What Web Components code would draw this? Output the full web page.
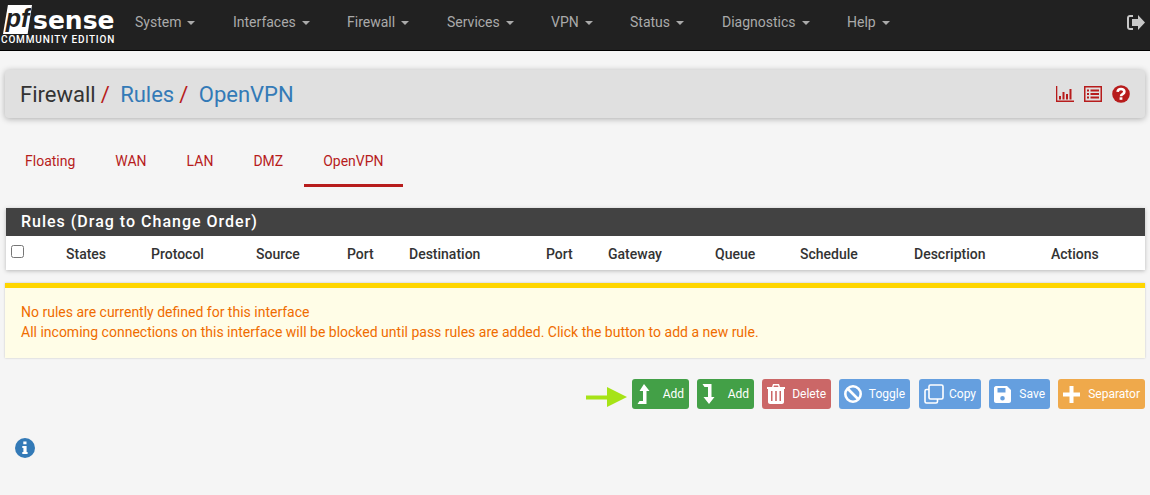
<!DOCTYPE html>
<html>
<head>
<meta charset="utf-8">
<title>Firewall: Rules: OpenVPN</title>
<style>
    html, body { margin: 0; padding: 0; }
    body {
        background: #f5f5f5;
        font-family: Roboto, "Liberation Sans", sans-serif;
        font-size: 14px;
        width: 1150px;
        height: 495px;
        overflow: hidden;
        position: relative;
    }
    main { display: block; padding: 19px 5px 0; }
</style>
</head>
<body>
<pf-navbar></pf-navbar>
<main>
    <pf-header></pf-header>
    <pf-tabs></pf-tabs>
    <pf-rules></pf-rules>
    <pf-alert>
        No rules are currently defined for this interface<br>
        All incoming connections on this interface will be blocked until pass rules are added. Click the button to add a new rule.
    </pf-alert>
    <pf-actions></pf-actions>
    <pf-info></pf-info>
</main>

<script>
const ICONS = {
    up: '<svg width="13" height="20" viewBox="0 0 13 20"><path fill="#fff" d="M7 0l5.500 7H9.500v13H.5l2-3h3.500V7H2.500z"/></svg>',
    down: '<svg width="13" height="20" viewBox="0 0 13 20"><path fill="#fff" d="M.5 0h9v13h3L7 20l-5.500-7H6V3H2.500z"/></svg>',
    trash: '<svg width="18" height="20" viewBox="0 0 18 20"><path fill="#fff" fill-rule="evenodd" d="M0 3h5l1-3h6l1 3h5v2h-1v13c0 1-1 2-2 2H3c-1 0-2-1-2-2V5H0zM7 1.500L6.500 3h5L11 1.500zM4 7v10h1.500V7zm4.200 0v10h1.600V7zm4.300 0v10H14V7z"/></svg>',
    ban: '<svg width="18" height="18" viewBox="0 0 18 18"><circle cx="9" cy="9" r="7.700" fill="none" stroke="#fff" stroke-width="2.600"/><path stroke="#fff" stroke-width="2.600" d="M3.500 3.500l11 11"/></svg>',
    clone: '<svg width="20" height="20" viewBox="0 0 20 20"><g fill="none" stroke="#fff" stroke-width="1.600"><path d="M5 5.500H2.500c-.8 0-1.500.7-1.500 1.500v10.500c0 .8.700 1.500 1.500 1.500H12c.8 0 1.500-.7 1.500-1.500V15"/><rect x="5" y="1" width="14" height="14" rx="1.500"/></g></svg>',
    save: '<svg width="17" height="17" viewBox="0 0 17 17"><path fill="#fff" fill-rule="evenodd" d="M2 0h11l4 4v11c0 1-1 2-2 2H2c-1 0-2-1-2-2V2C0 1 1 0 2 0zm1.500 2v4.500h8V2zm5 8a2.300 2.300 0 1 0 0 4.600 2.300 2.300 0 0 0 0-4.600z"/></svg>',
    plus: '<svg width="17" height="17" viewBox="0 0 17 17"><path fill="#fff" d="M6.500 0h4v6.500H17v4h-6.500V17h-4v-6.500H0v-4h6.500z"/></svg>',
    chart: '<svg width="18" height="16" viewBox="0 0 18 16"><path fill="#b71c1c" d="M0 0h1.300v14.500H18V16H0zM3 10h2v3.500H3zm3.500-4h2v7.500h-2zM10 8h2v5.500h-2zm3.500-5h2v10.500h-2z"/></svg>',
    list: '<svg width="18" height="16" viewBox="0 0 18 16"><path fill="#b71c1c" fill-rule="evenodd" d="M0 0h18v16H0zm1.500 1.500v13h15v-13zM3 3.500h2v2H3zm3.500 0H15v2H6.500zM3 7h2v2H3zm3.500 0H15v2H6.500zM3 10.500h2v2H3zm3.500 0H15v2H6.500z"/></svg>',
    help: '<svg width="18" height="18" viewBox="0 0 18 18"><circle cx="9" cy="9" r="8.800" fill="#b71c1c"/><path fill="none" stroke="#fff" stroke-width="2.600" d="M5.600 6.800C5.800 4.900 7.200 4 9 4c2 0 3.400 1.100 3.400 2.800 0 2.500-3.400 2.300-3.400 4.500"/><rect x="7.600" y="12.300" width="2.800" height="2.500" fill="#fff"/></svg>',
    signout: '<svg width="18" height="15" viewBox="0 0 18 15"><path fill="#c8c8c8" d="M6 0v2H3C2.400 2 2 2.400 2 3v9c0 .6.400 1 1 1h3v2H3c-1.700 0-3-1.300-3-3V3c0-1.700 1.300-3 3-3z"/><path fill="#c8c8c8" d="M11 0l7 7.500-7 7.500v-4H5V4h6z"/></svg>',
    info: '<svg width="20" height="20" viewBox="0 0 20 20"><circle cx="10" cy="10" r="10" fill="#337ab7"/><path fill="#fff" d="M8.300 3.500h3.200v2.800H8.300zM7.300 8h4.300v6h1v2H7.300v-2h1.100v-4H7.300z"/></svg>'
};

class PfNavbar extends HTMLElement {
    constructor() {
        super();
        this.attachShadow({mode: 'open'});
        const items = [['System', 98], ['Interfaces', 114], ['Firewall', 100], ['Services', 104], ['VPN', 79], ['Status', 92], ['Diagnostics', 125], ['Help', 60]];
        const links = items.map(([name, w]) => `<a style="width:${w}px">${name}<i></i></a>`).join('');
        this.shadowRoot.innerHTML = `
<style>
    :host {
        display: flex;
        align-items: stretch;
        height: 50px;
        background: #212121;
        border-bottom: 1px solid #000;
    }
    .logo {
        width: 135px;
        flex: none;
        position: relative;
        color: #fff;
    }
    .pf {
        position: absolute;
        left: 3px;
        top: 5px;
        width: 29px;
        height: 29px;
        background: #fff;
        clip-path: polygon(17% 0, 100% 0, 85% 100%, 0 100%);
        color: #212121;
        font: italic bold 25px/26px "Liberation Sans", sans-serif;
        text-align: center;
    }
    .sense {
        position: absolute;
        left: 33px;
        top: 6px;
        font: bold 25px/30px "DejaVu Sans", sans-serif;
    }
    .ce {
        position: absolute;
        left: 1px;
        top: 34px;
        font: 500 10px/12px Roboto, sans-serif;
        letter-spacing: 0.850px;
        white-space: nowrap;
    }
    nav { display: flex; align-items: center; flex: 1; padding-bottom: 6px; }
    a { color: #aaa; font-size: 14px; flex: none; white-space: nowrap; }
    i {
        display: inline-block;
        width: 0;
        height: 0;
        margin-left: 6px;
        vertical-align: middle;
        border-top: 4px solid #aaa;
        border-left: 4px solid transparent;
        border-right: 4px solid transparent;
    }
    .out { align-self: center; margin: 0 5px 6px 0; height: 15px; }
</style>
<div class="logo"><div class="pf">pf</div><div class="sense">sense</div><div class="ce">COMMUNITY EDITION</div></div>
<nav>${links}</nav>
<div class="out">${ICONS.signout}</div>`;
    }
}
customElements.define('pf-navbar', PfNavbar);

class PfHeader extends HTMLElement {
    constructor() {
        super();
        this.attachShadow({mode: 'open'});
        this.shadowRoot.innerHTML = `
<style>
    :host {
        display: flex;
        align-items: center;
        justify-content: space-between;
        height: 48px;
        padding: 0 15px;
        background: #e0e0e0;
        border-radius: 4px;
        box-shadow: 0 1px 6px rgba(0,0,0,.3);
        font-size: 22px;
    }
    .first { color: #333; }
    .link { color: #337ab7; }
    .sep { color: #b71c1c; padding: 0 5px; font-size: 22px; }
    .icons { display: flex; align-items: center; gap: 10px; }
    svg { display: block; }
</style>
<div><span class="first">Firewall</span><span class="sep">/</span> <span class="link">Rules</span><span class="sep">/</span> <span class="link">OpenVPN</span></div>
<div class="icons">${ICONS.chart}${ICONS.list}${ICONS.help}</div>`;
    }
}
customElements.define('pf-header', PfHeader);

class PfTabs extends HTMLElement {
    constructor() {
        super();
        this.attachShadow({mode: 'open'});
        const tabs = ['Floating', 'WAN', 'LAN', 'DMZ', 'OpenVPN'];
        this.shadowRoot.innerHTML = `
<style>
    :host { display: flex; margin-top: 27px; height: 42px; }
    a {
        display: block;
        padding: 0 20px;
        line-height: 33px;
        height: 39px;
        color: #b71c1c;
        font-size: 14px;
    }
    a:first-child { padding-left: 18px; }
    a.on { border-bottom: 3px solid #b71c1c; margin-left: 1px; padding: 0 19px; }
</style>
${tabs.map((t, i) => `<a class="${i === 4 ? 'on' : ''}">${t}</a>`).join('')}`;
    }
}
customElements.define('pf-tabs', PfTabs);

class PfRules extends HTMLElement {
    constructor() {
        super();
        this.attachShadow({mode: 'open'});
        const cols = ['States', 'Protocol', 'Source', 'Port', 'Destination', 'Port', 'Gateway', 'Queue', 'Schedule', 'Description', 'Actions'];
        this.shadowRoot.innerHTML = `
<style>
    :host {
        display: block;
        margin: 21px 0 0 1px;
        background: #fff;
        box-shadow: 0 1px 4px rgba(0,0,0,.25);
    }
    h2 {
        margin: 0;
        height: 28px;
        padding-left: 15px;
        background: #424242;
        color: #fff;
        font: 500 16px/28px Roboto, sans-serif;
        letter-spacing: 1px;
    }
    .row {
        display: grid;
        grid-template-columns: 55px 85px 105px 91px 62px 137px 62px 107px 85px 114px 137px 1fr;
        align-items: center;
        height: 34px;
        padding: 2px 0 0 5px;
        box-sizing: border-box;
        color: #333;
        font-weight: 500;
        font-size: 14px;
    }
    input { margin: 0 0 6px; width: 13px; height: 13px; }
</style>
<h2>Rules (Drag to Change Order)</h2>
<div class="row"><div><input type="checkbox"></div>${cols.map(c => `<div>${c}</div>`).join('')}</div>`;
    }
}
customElements.define('pf-rules', PfRules);

class PfAlert extends HTMLElement {
    constructor() {
        super();
        this.attachShadow({mode: 'open'});
        this.shadowRoot.innerHTML = `
<style>
    :host {
        display: block;
        margin-top: 13px;
        height: 70px;
        box-sizing: content-box;
        border-top: 5px solid #ffd600;
        background: #fffde7;
        box-shadow: 0 0 2px rgba(0,0,0,.2);
        color: #ef6c00;
        font-size: 14px;
        line-height: 20px;
    }
    div { padding: 14px 16px 0; }
</style>
<div><slot></slot></div>`;
    }
}
customElements.define('pf-alert', PfAlert);

class PfBtn extends HTMLElement {
    constructor() {
        super();
        this.attachShadow({mode: 'open'});
        this.shadowRoot.innerHTML = `
<style>
    :host {
        display: flex;
        align-items: center;
        box-sizing: border-box;
        height: 30px;
        padding: 0 5px;
        border-radius: 3px;
        color: #fff;
        font-size: 12px;
        font-weight: 400;
        white-space: nowrap;
    }
    .icon { display: flex; align-items: center; justify-content: center; }
    svg { display: block; }
    .label { margin-left: auto; }
</style>
<span class="icon"></span><span class="label"><slot></slot></span>`;
    }
    connectedCallback() {
        this.shadowRoot.querySelector('.icon').innerHTML = ICONS[this.getAttribute('icon')];
        this.style.background = this.getAttribute('color');
        this.style.width = this.getAttribute('w') + 'px';
    }
}
customElements.define('pf-btn', PfBtn);

class PfActions extends HTMLElement {
    constructor() {
        super();
        this.attachShadow({mode: 'open'});
        this.shadowRoot.innerHTML = `
<style>
    :host {
        display: flex;
        justify-content: flex-end;
        gap: 8px;
        margin-top: 21px;
        position: relative;
    }
    .arrow { position: absolute; left: 581px; top: 8px; }
    .wide { margin-right: 1px; }
</style>
<svg class="arrow" width="41" height="20" viewBox="0 0 41 20"><path fill="#a6e316" d="M0 8.500h21V0l20 10-20 10v-7.500H0z"/></svg>
<pf-btn icon="up" color="#43a047" w="57">Add</pf-btn>
<pf-btn icon="down" color="#43a047" w="57">Add</pf-btn>
<pf-btn icon="trash" color="#cb6767" w="69">Delete</pf-btn>
<pf-btn class="wide" icon="ban" color="#659fdf" w="71">Toggle</pf-btn>
<pf-btn icon="clone" color="#659fdf" w="62">Copy</pf-btn>
<pf-btn icon="save" color="#659fdf" w="61">Save</pf-btn>
<pf-btn icon="plus" color="#efa94b" w="87">Separator</pf-btn>`;
    }
}
customElements.define('pf-actions', PfActions);

class PfInfo extends HTMLElement {
    constructor() {
        super();
        this.attachShadow({mode: 'open'});
        this.shadowRoot.innerHTML = `
<style>
    :host { display: block; margin: 29px 0 0 10px; width: 20px; height: 20px; }
    svg { display: block; }
</style>${ICONS.info}`;
    }
}
customElements.define('pf-info', PfInfo);
</script>
</body>
</html>
